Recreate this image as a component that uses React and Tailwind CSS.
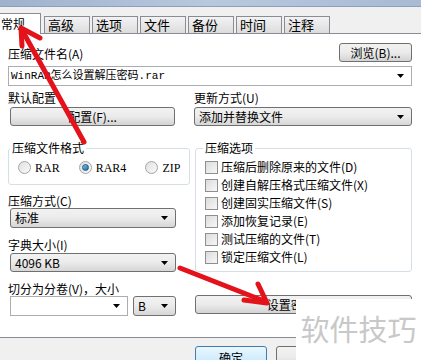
import React from 'react'

const font = { fontFamily: '"Noto Sans CJK SC", "Liberation Sans", sans-serif' }

const Caret = () => (
  <svg width="7" height="4" viewBox="0 0 7 4" className="shrink-0">
    <path d="M0 0h7L3.5 4z" fill="#000" />
  </svg>
)

// read-only dropdown, drawn like a button
const Combo = ({ text, className = '' }) => (
  <div
    className={`flex items-center justify-between rounded-[3px] border border-[#707070] bg-gradient-to-b from-[#f2f2f2] via-[#ebebeb] to-[#d6d6d6] pl-[4px] pr-[7px] ${className}`}
  >
    <span className="leading-none">{text}</span>
    <Caret />
  </div>
)

const Button = ({ children, className = '' }) => (
  <div
    className={`flex items-center justify-center rounded-[3px] border border-[#707070] bg-gradient-to-b from-[#f2f2f2] via-[#ebebeb] to-[#d3d3d3] leading-none ${className}`}
  >
    {children}
  </div>
)

const Radio = ({ label, checked }) => (
  <div className="flex items-center gap-[4px]">
    <div className="flex h-[13px] w-[13px] items-center justify-center rounded-full border border-[#a3a3a3] bg-gradient-to-br from-[#e0e0e0] to-[#fafafa]">
      {checked && (
        <div className="h-[7px] w-[7px] rounded-full border border-[#1d5a86] bg-gradient-to-br from-[#7cc4ee] to-[#1c6aa3]" />
      )}
    </div>
    <span className="leading-none" style={{ fontFamily: '"Liberation Serif", serif' }}>{label}</span>
  </div>
)

const Check = ({ label }) => (
  <div className="flex h-[18px] items-center gap-[3px]">
    <div className="h-[13px] w-[13px] shrink-0 border border-[#8f8f8f] bg-gradient-to-br from-[#dcdcdc] to-[#f7f7f7]" />
    <span className="leading-none">{label}</span>
  </div>
)

const Label = ({ children, className = '' }) => (
  <div className={`h-[15px] leading-[15px] ${className}`}>{children}</div>
)

export default function App() {
  const tabs = ['高级', '选项', '文件', '备份', '时间', '注释']
  const options = [
    '压缩后删除原来的文件(D)',
    '创建自解压格式压缩文件(X)',
    '创建固实压缩文件(S)',
    '添加恢复记录(E)',
    '测试压缩的文件(T)',
    '锁定压缩文件(L)'
  ]

  return (
    <div className="relative h-[360px] w-[421px] overflow-hidden bg-[#f0f0f0] text-[12px] text-black" style={font}>
      {/* window title strip */}
      <div className="h-[7px] border-b border-[#8da0bb] bg-gradient-to-r from-[#9fb2cd] via-[#b8c8de] to-[#a8bad4]" />

      {/* tabs */}
      <div className="flex h-[27px] items-end gap-[2px] border-b border-[#898c95]">
        <div className="-mb-px -ml-[4px] mr-[1px] flex h-[21px] w-[45px] items-center border-x border-t border-[#898c95] bg-white pl-[4px]">
          常规
        </div>
        {tabs.map(t => (
          <div
            key={t}
            className="flex h-[17px] w-[46px] items-center border-x border-t border-[#898c95] bg-gradient-to-b from-[#f3f3f3] to-[#dcdcdc] pl-[3px] text-[13px]"
          >
            {t}
          </div>
        ))}
      </div>

      {/* panel */}
      <div className="h-[304px] border-b border-[#898c95] bg-white pl-[8px] pr-[9px]">
        <div className="flex items-end justify-between pt-[9px]">
          <Label className="mb-[1px]">压缩文件名(A)</Label>
          <Button className="h-[19px] w-[73px]">浏览(B)...</Button>
        </div>
        <div className="mt-[4px] flex h-[20px] items-center justify-between border border-[#abadb3] bg-white pl-[2px] pr-[7px]">
          <span style={{ fontFamily: '"Liberation Mono", "Noto Sans CJK SC", monospace' }} className="text-[11px] leading-none">
            WinRAR怎么设置解压密码.rar
          </span>
          <Caret />
        </div>

        <div className="grid grid-cols-[168px_218px] gap-x-[18px]">
          {/* left column */}
          <div>
            <Label className="mt-[4px]">默认配置</Label>
            <Button className="ml-[2px] mt-[2px] h-[19px] w-[165px]">配置(F)...</Button>

            <fieldset className="mt-[16px] h-[43px] rounded-[3px] border border-[#d5dfe5] px-[9px]">
              <legend className="ml-[-8px] px-[2px] leading-[12px]">压缩文件格式</legend>
              <div className="mt-[7px] flex gap-[19px]">
                <Radio label="RAR" />
                <Radio label="RAR4" checked />
                <Radio label="ZIP" />
              </div>
            </fieldset>

            <Label className="mt-[8px]">压缩方式(C)</Label>
            <Combo text="标准" className="ml-[2px] h-[20px] w-[166px]" />

            <Label className="mt-[9px]">字典大小(I)</Label>
            <Combo text="4096 KB" className="ml-[2px] mt-[1px] h-[19px] w-[166px]" />

            <Label className="mt-[9px]">切分为分卷(V)，大小</Label>
            <div className="ml-[2px] flex gap-[5px]">
              <div className="flex h-[20px] w-[118px] items-center justify-end border border-[#abadb3] bg-white pr-[7px]">
                <Caret />
              </div>
              <Combo text="B" className="h-[20px] w-[43px]" />
            </div>
          </div>

          {/* right column */}
          <div>
            <Label className="mt-[4px]">更新方式(U)</Label>
            <Combo text="添加并替换文件" className="mt-[2px] h-[19px] w-[218px]" />

            <fieldset className="ml-[1px] mt-[16px] h-[130px] rounded-[3px] border border-[#d5dfe5] px-[9px]">
              <legend className="ml-[-2px] px-[2px] leading-[12px]">压缩选项</legend>
              <div className="mt-[4px]">
                {options.map(o => (
                  <Check key={o} label={o} />
                ))}
              </div>
            </fieldset>

            <Button className="ml-[1px] mt-[23px] h-[19px] w-[217px]">设置密码(P)...</Button>
          </div>
        </div>
      </div>

      {/* dialog buttons */}
      <div className="flex gap-[9px] pl-[195px] pt-[8px]">
        <div className="flex h-[23px] w-[72px] items-center justify-center rounded-[3px] border border-[#3c7fb1] bg-gradient-to-b from-[#eaf6fd] to-[#bee6fd]">
          确定
        </div>
        <Button className="h-[23px] w-[72px]">取消</Button>
      </div>

      {/* watermark */}
      <div className="absolute bottom-0 left-[296px] right-0 top-[299px] flex items-start justify-center bg-white pt-[12px]">
        <span className="text-[29px] leading-[34px] text-[#c8c8c8]">软件技巧</span>
      </div>

      {/* red annotation arrows */}
      <svg className="pointer-events-none absolute left-0 top-0" width="421" height="360">
        <g stroke="#e3121b" strokeWidth="5" strokeLinecap="round" fill="none">
          <path d="M84 142L22 30" />
          <path d="M40 38L21 28L22 46" strokeLinejoin="round" />
          <path d="M180 268L264 301" />
          <path d="M258 284L267 303L244 300" strokeLinejoin="round" />
        </g>
      </svg>
    </div>
  )
}
